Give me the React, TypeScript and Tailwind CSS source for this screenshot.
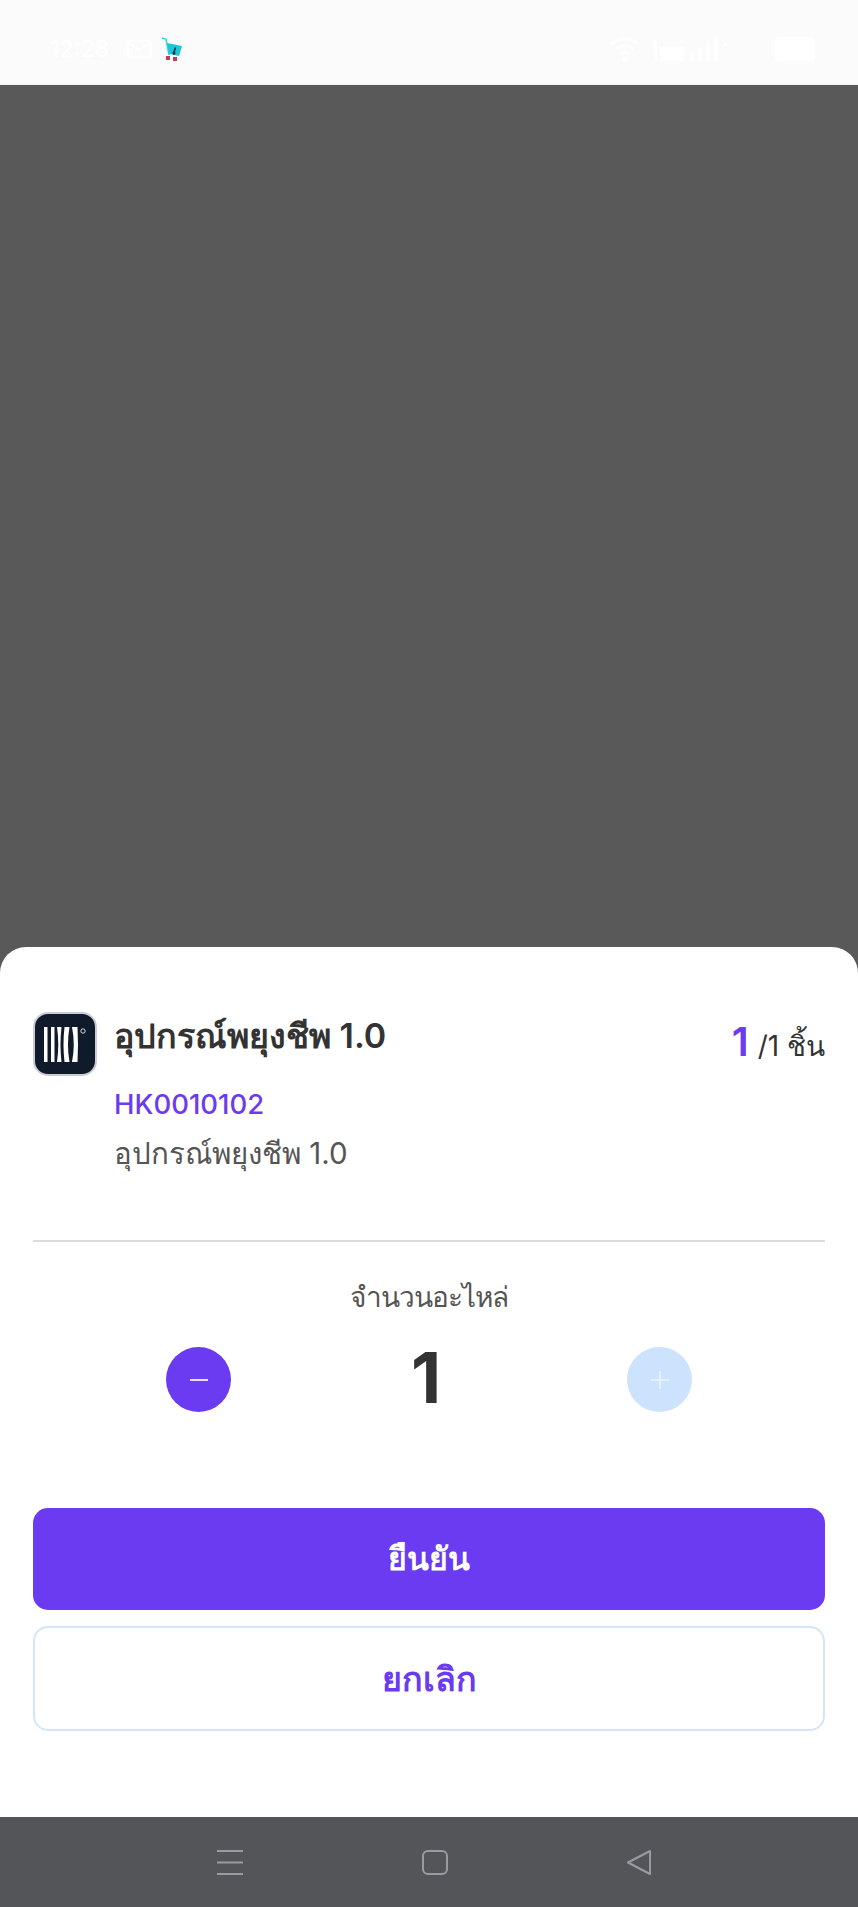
const purple = 'bg-[#6a3bf0]';

function AppLogo() {
  return (
    <div className="w-16 h-16 shrink-0 rounded-[15px] bg-[#0f1a2b] border-2 border-[#c9ccd6] overflow-hidden">
      <svg width="60" height="60" viewBox="0 0 60 60">
        <g fill="#ffffff">
          <path d="M9 13h3.5v35H9z" />
          <path d="M16 13h3.5v35H16z" />
          <path d="M22 13h4.5q-2 17.5 0 35H22q2.5-17.5 0-35z" />
          <path d="M29.5 13h5q-3 17.5 0 35h-5q-2-17.5 0-35z" />
          <path d="M37 13h5.5q1 17.5 0 35H37q3.5-17.5 0-35z" />
        </g>
        <circle cx="48" cy="17" r="2.2" fill="none" stroke="#ffffff" strokeWidth="0.8" />
      </svg>
    </div>
  );
}

function CartIcon() {
  return (
    <svg width="22" height="24" viewBox="0 0 22 24">
      <path d="M1 1l4 1 3 16" fill="none" stroke="#2dd4e0" strokeWidth="1.5" />
      <path d="M6 6l15 3-3 10-10-2z" fill="#1cc4d4" />
      <path d="M12 15l2-5 1 1-1 4a1.5 1.5 0 1 1-2 0z" fill="#12324a" />
      <rect x="5" y="19" width="4" height="4" fill="#c8385a" />
      <rect x="12" y="20" width="4" height="4" fill="#c8385a" />
    </svg>
  );
}

function StatusBar() {
  return (
    <div className="h-[85px] shrink-0 bg-[#fbfbfb] border-b border-[#f1f1f1] flex items-center justify-between pt-[14px] pl-[50px] pr-[43px] text-white font-['Inter',sans-serif]">
      <div className="flex items-center">
        <span className="text-[23px] font-medium">12:28</span>
        <svg className="ml-[17px]" width="27" height="22" viewBox="0 0 27 22" fill="none" stroke="#ffffff" strokeWidth="2">
          <rect x="2" y="3" width="23" height="16" rx="2" />
          <path d="M2 4l11 8 12-8" />
        </svg>
        <div className="ml-[8px]">
          <CartIcon />
        </div>
      </div>
      <div className="flex items-center">
        <svg width="34" height="26" viewBox="0 0 34 26" fill="none" stroke="#ffffff" strokeWidth="2.5">
          <path d="M3 8q14-10 28 0" />
          <path d="M8 13q9-6 18 0" />
          <path d="M13 18q4-3 8 0" />
          <circle cx="17" cy="23" r="1.5" fill="#ffffff" />
        </svg>
        <svg className="ml-[10px]" width="76" height="28" viewBox="0 0 76 28" fill="#ffffff">
          <rect x="2" y="6" width="3" height="20" />
          <rect x="8" y="12" width="24" height="14" />
          <rect x="38" y="18" width="4" height="8" />
          <rect x="46" y="13" width="4" height="13" />
          <rect x="54" y="7" width="4" height="19" />
          <rect x="62" y="2" width="4" height="24" />
          <rect x="72" y="8" width="3" height="3" />
        </svg>
        <div className="w-[40px] h-[24px] rounded-[4px] bg-white ml-[47px]" />
      </div>
    </div>
  );
}

function NavBar() {
  return (
    <div className="h-[90px] shrink-0 bg-[#545559] pt-[33px]">
      <div className="w-full flex justify-center items-center gap-[179px] pl-[10px] text-[#9a9ba0]">
        <svg width="26" height="25" viewBox="0 0 26 25" stroke="currentColor" strokeWidth="2">
          <path d="M0 1h26M0 12.5h26M0 24h26" />
        </svg>
        <svg width="26" height="25" viewBox="0 0 26 25" fill="none" stroke="currentColor" strokeWidth="2">
          <rect x="1" y="1" width="24" height="23" rx="5" />
        </svg>
        <svg width="24" height="25" viewBox="0 0 24 25" fill="none" stroke="currentColor" strokeWidth="2" strokeLinejoin="round">
          <path d="M23 1v23L1 12.5z" />
        </svg>
      </div>
    </div>
  );
}

export default function App() {
  return (
    <div className="w-[858px] h-[1907px] flex flex-col bg-[#595959] font-['Inter','Noto_Sans',sans-serif] overflow-hidden">
      <StatusBar />
      <div className="flex-1" />
      <div className="h-[870px] shrink-0 bg-white rounded-t-[26px] px-[33px] pt-[65px]">
        <div className="flex items-start gap-[17px]">
          <AppLogo />
          <div className="flex-1">
            <div className="mt-[2px] text-[34px] leading-[44px] font-semibold text-[#333333]">อุปกรณ์พยุงชีพ 1.0</div>
            <div className="mt-[26px] text-[27.5px] leading-[40px] font-medium text-[#6a3bf0]">HK0010102</div>
            <div className="mt-[9px] text-[29.5px] leading-[40px] text-[#555555]">อุปกรณ์พยุงชีพ 1.0</div>
          </div>
          <div className="mt-[5px] flex items-baseline gap-[9px] text-[#333333] text-[28px]">
            <span className="text-[40px] leading-[50px] font-semibold text-[#6a3bf0]">1</span>
            <span>/1 ชิ้น</span>
          </div>
        </div>
        <div className="h-[2px] bg-[#dcdcdf] mt-[67px]" />
        <div className="mt-[35px] text-center text-[28px] leading-[40px] tracking-[-1px] text-[#555555]">จำนวนอะไหล่</div>
        <div className="mt-[30px] flex items-center justify-center gap-[148px]">
          <div className={`w-[65px] h-[65px] rounded-full ${purple} flex items-center justify-center`}>
            <div className="w-[18px] h-[2px] bg-[#e8e0ff]" />
          </div>
          <div className="w-[100px] h-[65px] pr-[6px] text-center text-[70px] leading-[61px] font-bold text-[#333333]">1</div>
          <div className="w-[65px] h-[65px] rounded-full bg-[#cde3fd] flex items-center justify-center text-[#e6f1fe]">
            <svg width="18" height="18" viewBox="0 0 18 18" stroke="currentColor" strokeWidth="2">
              <path d="M0 9h18M9 0v18" />
            </svg>
          </div>
        </div>
        <div className={`mt-[96px] h-[102px] rounded-[15px] ${purple} flex items-center justify-center text-white text-[32px] font-semibold`}>ยืนยัน</div>
        <div className="mt-[16px] h-[105px] rounded-[15px] bg-white border-2 border-[#d3e5fb] flex items-center justify-center text-[#6a3bf0] text-[34px] font-semibold">ยกเลิก</div>
      </div>
      <NavBar />
    </div>
  );
}
